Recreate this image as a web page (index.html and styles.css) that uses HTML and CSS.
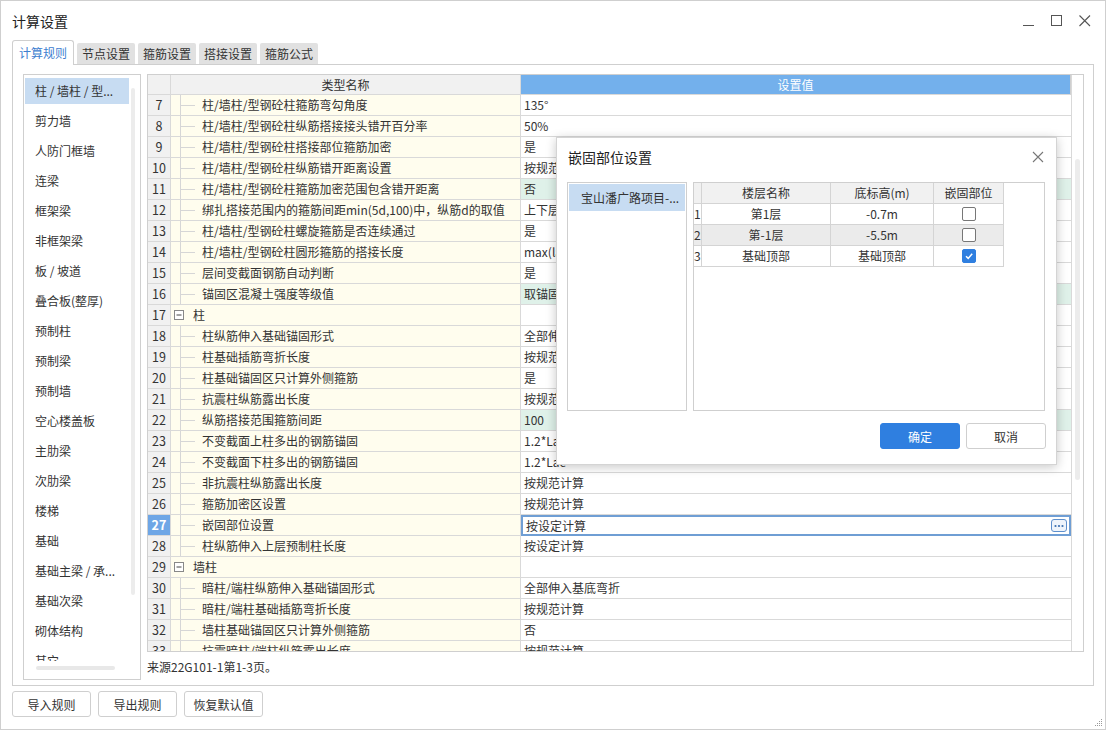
FILE: index.html
```html
<!DOCTYPE html>
<html lang="zh-CN">
<head>
<meta charset="utf-8">
<title>计算设置</title>
<link rel="stylesheet" href="styles.css">
</head>
<body>
<div class="window">
  <div class="titlebar">
    <div class="title">计算设置</div>
    <div class="controls">
      <svg class="ctl" width="14" height="14" viewBox="0 0 14 14"><line x1="1" y1="11.5" x2="12" y2="11.5" stroke="#555" stroke-width="1"/></svg>
      <svg class="ctl" width="14" height="14" viewBox="0 0 14 14"><rect x="1.5" y="1.5" width="10" height="10" fill="none" stroke="#555" stroke-width="1"/></svg>
      <svg class="ctl" width="14" height="14" viewBox="0 0 14 14"><path d="M1.5 1.5 L12 12 M12 1.5 L1.5 12" stroke="#555" stroke-width="1.1"/></svg>
    </div>
  </div>
  <div class="tabs">
    <div class="tab active">计算规则</div>
    <div class="tab">节点设置</div>
    <div class="tab">箍筋设置</div>
    <div class="tab">搭接设置</div>
    <div class="tab">箍筋公式</div>
  </div>
  <div class="panel">
    <div class="sidelist">
      <div class="items">
        <div class="item sel">柱 / 墙柱 / 型...</div>
        <div class="item">剪力墙</div>
        <div class="item">人防门框墙</div>
        <div class="item">连梁</div>
        <div class="item">框架梁</div>
        <div class="item">非框架梁</div>
        <div class="item">板 / 坡道</div>
        <div class="item">叠合板(整厚)</div>
        <div class="item">预制柱</div>
        <div class="item">预制梁</div>
        <div class="item">预制墙</div>
        <div class="item">空心楼盖板</div>
        <div class="item">主肋梁</div>
        <div class="item">次肋梁</div>
        <div class="item">楼梯</div>
        <div class="item">基础</div>
        <div class="item">基础主梁 / 承...</div>
        <div class="item">基础次梁</div>
        <div class="item">砌体结构</div>
        <div class="item">其它</div>
      </div>
      <div class="hscroll"><div class="hthumb"></div></div>
      <div class="vthumb"></div>
    </div>
    <div class="main">
      <div class="tablebox">
        <div class="grid">
          <div class="hrow">
            <div class="c num h"></div>
            <div class="c name h">类型名称</div>
            <div class="c val h blue">设置值</div>
          </div>
          <div class="row"><div class="c num">7</div><div class="c name"><span class="tree"></span>柱/墙柱/型钢砼柱箍筋弯勾角度</div><div class="c val">135°</div></div>
          <div class="row"><div class="c num">8</div><div class="c name"><span class="tree"></span>柱/墙柱/型钢砼柱纵筋搭接接头错开百分率</div><div class="c val">50%</div></div>
          <div class="row"><div class="c num">9</div><div class="c name"><span class="tree"></span>柱/墙柱/型钢砼柱搭接部位箍筋加密</div><div class="c val">是</div></div>
          <div class="row"><div class="c num">10</div><div class="c name"><span class="tree"></span>柱/墙柱/型钢砼柱纵筋错开距离设置</div><div class="c val">按规范计算</div></div>
          <div class="row"><div class="c num">11</div><div class="c name"><span class="tree"></span>柱/墙柱/型钢砼柱箍筋加密范围包含错开距离</div><div class="c val green">否</div></div>
          <div class="row"><div class="c num">12</div><div class="c name"><span class="tree"></span>绑扎搭接范围内的箍筋间距min(5d,100)中，纵筋d的取值</div><div class="c val">上下层最小直径</div></div>
          <div class="row"><div class="c num">13</div><div class="c name"><span class="tree"></span>柱/墙柱/型钢砼柱螺旋箍筋是否连续通过</div><div class="c val">是</div></div>
          <div class="row"><div class="c num">14</div><div class="c name"><span class="tree"></span>柱/墙柱/型钢砼柱圆形箍筋的搭接长度</div><div class="c val">max(lae,300)</div></div>
          <div class="row"><div class="c num">15</div><div class="c name"><span class="tree"></span>层间变截面钢筋自动判断</div><div class="c val">是</div></div>
          <div class="row"><div class="c num">16</div><div class="c name"><span class="tree"></span>锚固区混凝土强度等级值</div><div class="c val green">取锚固区混凝土强度等级</div></div>
          <div class="row"><div class="c num">17</div><div class="c name grp"><span class="box"><svg width="8" height="8" viewBox="0 0 8 8"><line x1="1.5" y1="4" x2="6.5" y2="4" stroke="#444" stroke-width="1"/></svg></span>柱</div><div class="c val"></div></div>
          <div class="row"><div class="c num">18</div><div class="c name"><span class="tree"></span>柱纵筋伸入基础锚固形式</div><div class="c val">全部伸入基底弯折</div></div>
          <div class="row"><div class="c num">19</div><div class="c name"><span class="tree"></span>柱基础插筋弯折长度</div><div class="c val">按规范计算</div></div>
          <div class="row"><div class="c num">20</div><div class="c name"><span class="tree"></span>柱基础锚固区只计算外侧箍筋</div><div class="c val">是</div></div>
          <div class="row"><div class="c num">21</div><div class="c name"><span class="tree"></span>抗震柱纵筋露出长度</div><div class="c val">按规范计算</div></div>
          <div class="row"><div class="c num">22</div><div class="c name"><span class="tree"></span>纵筋搭接范围箍筋间距</div><div class="c val green">100</div></div>
          <div class="row"><div class="c num">23</div><div class="c name"><span class="tree"></span>不变截面上柱多出的钢筋锚固</div><div class="c val">1.2*Lae</div></div>
          <div class="row"><div class="c num">24</div><div class="c name"><span class="tree"></span>不变截面下柱多出的钢筋锚固</div><div class="c val">1.2*Lae</div></div>
          <div class="row"><div class="c num">25</div><div class="c name"><span class="tree"></span>非抗震柱纵筋露出长度</div><div class="c val">按规范计算</div></div>
          <div class="row"><div class="c num">26</div><div class="c name"><span class="tree"></span>箍筋加密区设置</div><div class="c val">按规范计算</div></div>
          <div class="row"><div class="c num cur">27</div><div class="c name"><span class="tree"></span>嵌固部位设置</div><div class="c val edit"><span>按设定计算</span><span class="dots"><svg width="10" height="4" viewBox="0 0 10 4"><circle cx="1.5" cy="2" r="1.1" fill="#3b6fb0"/><circle cx="5" cy="2" r="1.1" fill="#3b6fb0"/><circle cx="8.5" cy="2" r="1.1" fill="#3b6fb0"/></svg></span></div></div>
          <div class="row"><div class="c num">28</div><div class="c name"><span class="tree"></span>柱纵筋伸入上层预制柱长度</div><div class="c val">按设定计算</div></div>
          <div class="row"><div class="c num">29</div><div class="c name grp"><span class="box"><svg width="8" height="8" viewBox="0 0 8 8"><line x1="1.5" y1="4" x2="6.5" y2="4" stroke="#444" stroke-width="1"/></svg></span>墙柱</div><div class="c val"></div></div>
          <div class="row"><div class="c num">30</div><div class="c name"><span class="tree"></span>暗柱/端柱纵筋伸入基础锚固形式</div><div class="c val">全部伸入基底弯折</div></div>
          <div class="row"><div class="c num">31</div><div class="c name"><span class="tree"></span>暗柱/端柱基础插筋弯折长度</div><div class="c val">按规范计算</div></div>
          <div class="row"><div class="c num">32</div><div class="c name"><span class="tree"></span>墙柱基础锚固区只计算外侧箍筋</div><div class="c val">否</div></div>
          <div class="row"><div class="c num">33</div><div class="c name"><span class="tree"></span>抗震暗柱/端柱纵筋露出长度</div><div class="c val">按规范计算</div></div>
        </div>
        <div class="vgutter"><div class="vbar"></div></div>
      </div>
      <div class="source">来源22G101-1第1-3页。</div>
    </div>
  </div>
  <div class="footer">
    <button class="btn">导入规则</button>
    <button class="btn">导出规则</button>
    <button class="btn">恢复默认值</button>
  </div>
  <div class="grip">
    <svg width="10" height="10" viewBox="0 0 10 10"><g fill="#999"><rect x="8" y="2" width="1" height="1"/><rect x="6" y="4" width="1" height="1"/><rect x="8" y="4" width="1" height="1"/><rect x="4" y="6" width="1" height="1"/><rect x="6" y="6" width="1" height="1"/><rect x="8" y="6" width="1" height="1"/><rect x="2" y="8" width="1" height="1"/><rect x="4" y="8" width="1" height="1"/><rect x="6" y="8" width="1" height="1"/><rect x="8" y="8" width="1" height="1"/></g></svg>
  </div>

  <div class="dialog">
    <div class="dtitle">
      <span>嵌固部位设置</span>
      <svg width="12" height="12" viewBox="0 0 12 12"><path d="M1 1 L11 11 M11 1 L1 11" stroke="#777" stroke-width="1.1"/></svg>
    </div>
    <div class="dbody">
      <div class="dlist"><div class="ditem">宝山潘广路项目-...</div></div>
      <div class="dtable">
        <div class="drow dhead"><div class="dc dn"></div><div class="dc d1">楼层名称</div><div class="dc d2">底标高(m)</div><div class="dc d3">嵌固部位</div></div>
        <div class="drow"><div class="dc dn">1</div><div class="dc d1">第1层</div><div class="dc d2">-0.7m</div><div class="dc d3"><span class="cb"></span></div></div>
        <div class="drow alt"><div class="dc dn">2</div><div class="dc d1">第-1层</div><div class="dc d2">-5.5m</div><div class="dc d3"><span class="cb"></span></div></div>
        <div class="drow"><div class="dc dn">3</div><div class="dc d1">基础顶部</div><div class="dc d2">基础顶部</div><div class="dc d3"><span class="cb on"><svg width="10" height="10" viewBox="0 0 10 10"><path d="M2 5.2 L4.2 7.4 L8.2 2.8" fill="none" stroke="#fff" stroke-width="1.5"/></svg></span></div></div>
      </div>
    </div>
    <div class="dfoot">
      <button class="dbtn primary">确定</button>
      <button class="dbtn">取消</button>
    </div>
  </div>
</div>
</body>
</html>
```
FILE: styles.css
```css
* { box-sizing: border-box; }
html, body { margin: 0; padding: 0; }
body {
  width: 1106px;
  height: 730px;
  background: #fff;
  font-family: "Noto Sans CJK SC", "Noto Sans", sans-serif;
  font-size: 12px;
  color: #333;
  overflow: hidden;
}
.window {
  position: relative;
  width: 1106px;
  height: 730px;
  border: 1px solid #cfcfcf;
  display: flex;
  flex-direction: column;
  background: #fff;
}
.titlebar {
  height: 39px;
  display: flex;
  align-items: center;
  justify-content: space-between;
  padding: 0 11px 0 11px;
}
.title { font-size: 14px; color: #222; }
.controls { display: flex; gap: 14px; align-items: center; margin-right: 2px; }
.ctl { display: block; }
.tabs {
  height: 24px;
  display: flex;
  align-items: flex-end;
  gap: 3px;
  padding-left: 11px;
  position: relative;
  z-index: 1;
}
.tab {
  height: 21px;
  line-height: 21px;
  padding: 0 5px;
  background: #e1e1e1;
  color: #333;
  border-radius: 2px 2px 0 0;
  font-size: 12px;
}
.tab.active {
  height: 25px;
  line-height: 24px;
  padding: 0 6px;
  background: #fff;
  color: #3d80d0;
  border: 1px solid #cfcfcf;
  border-bottom: none;
  border-radius: 3px 3px 0 0;
  margin-bottom: -1px;
}
.panel {
  margin: 0 11px;
  height: 622px;
  border: 1px solid #cfcfcf;
  display: flex;
  gap: 6px;
  padding: 9px 9px 5px 10px;
}
.sidelist {
  position: relative;
  width: 118px;
  border: 1px solid #cfcfcf;
  display: flex;
  flex-direction: column;
  padding: 0 0 0 1px;
}
.items { flex: 1; overflow: hidden; padding-top: 3px; }
.item {
  height: 26px;
  line-height: 26px;
  margin: 0 0 4px 0;
  width: 104px;
  padding-left: 10px;
  white-space: nowrap;
  color: #333;
}
.item.sel { background: #c7dcf2; }
.hscroll { height: 18px; position: relative; }
.hthumb {
  position: absolute;
  left: 11px; top: 5px;
  width: 79px; height: 4px;
  border-radius: 2px;
  background: #e8e8e8;
}
.vthumb {
  position: absolute;
  right: 5px; top: 13px;
  width: 4px; height: 507px;
  border-radius: 2px;
  background: #ececec;
}
.main { flex: 1; display: flex; flex-direction: column; }
.tablebox {
  height: 578px;
  border: 1px solid #cfcfcf;
  display: flex;
  overflow: hidden;
}
.grid { width: 923px; overflow: hidden; }
.hrow, .row { display: flex; height: 21px; }
.hrow { height: 20px; }
.c {
  border-right: 1px solid #d9d9d9;
  border-bottom: 1px solid #d9d9d9;
  white-space: nowrap;
  overflow: hidden;
  line-height: 20px;
}
.num { width: 23px; background: #f1f1f1; text-align: center; font-size: 12.5px; color: #333; }
.name { width: 350px; background: #fffdee; position: relative; padding-left: 31px; }
.val { width: 550px; background: #fff; padding-left: 3px; border-right: none; }
.h { background: #f1f1f1; text-align: center; padding-left: 0; line-height: 19px; }
.h.blue { background: #73b0ec; color: #fff; border-right: 1px solid #cfcfcf; }
.green { background: #dff1e9; }
.tree {
  position: absolute;
  left: 9px; top: 0;
  width: 15px; height: 21px;
  border-left: 1px solid #d6d6d6;
}
.tree::after {
  content: "";
  position: absolute;
  left: 0; top: 10px;
  width: 14px; height: 1px;
  background: #d6d6d6;
}
.grp { padding-left: 22px; }
.box {
  position: absolute;
  left: 3px; top: 5px;
  width: 10px; height: 10px;
  border: 1px solid #888;
  background: #fff;
  display: flex;
  align-items: center;
  justify-content: center;
}
.num.cur { background: #6ea6e6; color: #fff; font-weight: bold; }
.val.edit {
  border: 2px solid #6f9ed4;
  padding-left: 3px;
  line-height: 17px;
  display: flex;
  align-items: center;
  justify-content: space-between;
  padding-right: 2px;
}
.dots {
  width: 16px; height: 13px;
  border: 1px solid #5d8fcc;
  border-radius: 3px;
  background: #eef4fb;
  display: flex;
  align-items: center;
  justify-content: center;
}
.vgutter { flex: 1; position: relative; border-left: 1px solid #d9d9d9; }
.vbar {
  position: absolute;
  left: 3px; top: 84px;
  width: 5px; height: 321px;
  border-radius: 3px;
  background: #ececec;
}
.source { padding-top: 6px; font-size: 12px; color: #333; }
.footer {
  display: flex;
  gap: 7px;
  padding: 5px 11px 0 11px;
}
.btn {
  width: 79px;
  height: 26px;
  border: 1px solid #cfcfcf;
  border-radius: 3px;
  background: #fff;
  font-family: inherit;
  font-size: 12px;
  color: #333;
  padding: 0;
}
.grip { position: absolute; right: 2px; bottom: 2px; line-height: 0; }

.dialog {
  position: absolute;
  left: 555px; top: 136px;
  width: 501px; height: 328px;
  background: #fff;
  border: 1px solid #d4d4d4;
  box-shadow: 0 2px 10px rgba(0,0,0,0.22);
  display: flex;
  flex-direction: column;
  z-index: 5;
}
.dtitle {
  height: 38px;
  display: flex;
  align-items: center;
  justify-content: space-between;
  padding: 0 12px 0 11px;
  font-size: 14px;
  color: #222;
}
.dbody {
  display: flex;
  gap: 6px;
  padding: 6px 10px 0 10px;
  height: 235px;
}
.dlist {
  width: 120px;
  height: 229px;
  border: 1px solid #cfcfcf;
  padding: 1px;
}
.ditem {
  height: 27px;
  line-height: 27px;
  background: #c7dcf2;
  padding-left: 12px;
  white-space: nowrap;
}
.dtable {
  width: 352px;
  height: 229px;
  border: 1px solid #cfcfcf;
}
.drow { display: flex; height: 21px; }
.drow.alt .dc { background: #ebebeb; }
.dc {
  border-right: 1px solid #d4d4d4;
  border-bottom: 1px solid #d4d4d4;
  text-align: center;
  line-height: 20px;
  display: flex;
  align-items: center;
  justify-content: center;
}
.dhead .dc { background: #f1f1f1; }
.dn { width: 8px; justify-content: flex-start; overflow: visible; }
.d1 { width: 129px; }
.d2 { width: 103px; }
.d3 { width: 70px; }
.cb {
  width: 14px; height: 14px;
  border: 1px solid #777;
  border-radius: 2px;
  background: #fff;
  display: flex;
  align-items: center;
  justify-content: center;
}
.cb.on { background: #2f7fe0; border-color: #2f7fe0; }
.dfoot {
  display: flex;
  justify-content: flex-end;
  gap: 6px;
  padding: 12px 10px 0 0;
}
.dbtn {
  width: 80px;
  height: 26px;
  border: 1px solid #cfcfcf;
  border-radius: 3px;
  background: #fff;
  font-family: inherit;
  font-size: 12px;
  color: #333;
  padding: 0;
}
.dbtn.primary { background: #2f7fe0; border-color: #2f7fe0; color: #fff; }
```
